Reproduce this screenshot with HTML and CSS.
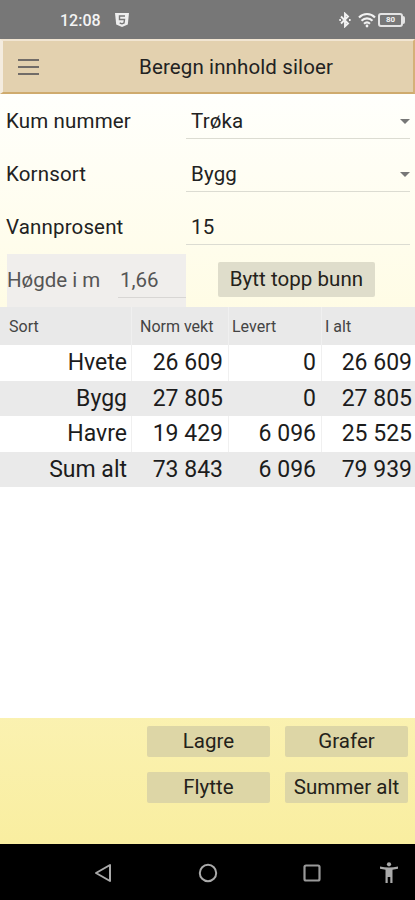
FILE: index.html
```html
<!DOCTYPE html>
<html lang="no">
<head>
    <meta charset="UTF-8">
    <meta name="viewport" content="width=device-width, initial-scale=1.0">
    <title>Beregn innhold siloer</title>
    <link rel="stylesheet" href="styles.css">
</head>
<body>
    <div class="statusbar">
        <span class="clock">12:08</span>
        <svg class="badge" width="14" height="14" viewBox="0 0 14 14">
            <path d="M0 0h14l-1.200 11.500L7 14l-5.800-2.500z" fill="#eee"/>
            <path d="M10 3H4.500v3.500H9.500L9 10l-2 .8-2.300-.8" fill="none" stroke="#777" stroke-width="1.400"/>
        </svg>
        <div class="status-icons">
            <svg width="12" height="16" viewBox="0 0 12 16" fill="none" stroke="#f2f2f2" stroke-width="1.900">
                <path d="M2 4.500l7 7L6 14.300V1.700l3 2.800-7 7"/>
                <path d="M.3 8h1.600M10 8h1.600"/>
            </svg>
            <svg class="wifi" width="18" height="16" viewBox="0 0 18 16" fill="none" stroke="#f2f2f2" stroke-width="2.100">
                <path d="M1 5.500c4.500-4.600 11.500-4.600 16 0M3.500 8.800c3.200-3.200 7.800-3.200 11 0M6 11.800c1.800-1.700 4.200-1.700 6 0"/>
                <circle cx="9" cy="14" r="1.400" fill="#f2f2f2" stroke="none"/>
            </svg>
            <div class="battery">80</div>
        </div>
    </div>

    <div class="topbar">
        <div class="menu"><i></i><i></i><i></i></div>
        <h1>Beregn innhold siloer</h1>
    </div>

    <div class="content">
        <div class="row">
            <label>Kum nummer</label>
            <div class="field select">Trøka</div>
        </div>
        <div class="row">
            <label>Kornsort</label>
            <div class="field select">Bygg</div>
        </div>
        <div class="row">
            <label>Vannprosent</label>
            <div class="field">15</div>
        </div>
        <div class="height-row">
            <div class="height-box">
                <label>Høgde i m</label>
                <div class="height-value">1,66</div>
            </div>
            <button class="swap">Bytt topp bunn</button>
        </div>

        <div class="table-area">
            <table>
                <thead>
                    <tr><th>Sort</th><th>Norm vekt</th><th>Levert</th><th>I alt</th></tr>
                </thead>
                <tbody>
                    <tr><td>Hvete</td><td>26 609</td><td>0</td><td>26 609</td></tr>
                    <tr><td>Bygg</td><td>27 805</td><td>0</td><td>27 805</td></tr>
                    <tr><td>Havre</td><td>19 429</td><td>6 096</td><td>25 525</td></tr>
                    <tr><td>Sum alt</td><td>73 843</td><td>6 096</td><td>79 939</td></tr>
                </tbody>
            </table>
        </div>

        <div class="actions">
            <button>Lagre</button>
            <button>Grafer</button>
            <button>Flytte</button>
            <button>Summer alt</button>
        </div>
    </div>

    <div class="navbar">
        <svg width="18" height="20" viewBox="0 0 18 20" fill="none" stroke="#aaa" stroke-width="2" stroke-linejoin="round">
            <path d="M16 2v16L2 10z"/>
        </svg>
        <svg width="20" height="20" viewBox="0 0 20 20" fill="none" stroke="#aaa" stroke-width="2">
            <circle cx="10" cy="10" r="8.200"/>
        </svg>
        <svg width="18" height="18" viewBox="0 0 18 18" fill="none" stroke="#999" stroke-width="2.200">
            <rect x="1.500" y="1.500" width="15" height="15" rx="1.500"/>
        </svg>
        <svg width="18" height="21" viewBox="0 0 18 21" fill="#aaa">
            <circle cx="9" cy="2.300" r="2.100"/>
            <path d="M0 4.600c6 1.200 12 1.200 18 0v2.100l-5.500 1V21h-2.200v-6H7.700v6H5.500V7.700L0 6.700z"/>
        </svg>
    </div>
</body>
</html>
```
FILE: styles.css
```css
* {
    box-sizing: border-box;
    margin: 0;
    padding: 0;
}

body {
    width: 415px;
    height: 900px;
    display: flex;
    flex-direction: column;
    overflow: hidden;
    font-family: Roboto, "Liberation Sans", sans-serif;
    font-size: 20.5px;
    letter-spacing: 0.15px;
    color: #222;
}

.statusbar {
    height: 39px;
    background: #777;
    display: flex;
    align-items: center;
    padding: 0 10px 0 60px;
    color: #f4f4f4;
}

.clock {
    width: 55px;
    font-size: 16px;
    font-weight: 500;
    letter-spacing: 0;
    padding-top: 2px;
}

.status-icons {
    margin-left: auto;
    display: flex;
    align-items: center;
}

.wifi {
    margin: 0 2px 0 7px;
}

.battery {
    position: relative;
    width: 25px;
    height: 14px;
    margin-right: 2px;
    border: 2px solid #e4e4e4;
    border-radius: 3px;
    font-size: 8px;
    font-weight: 700;
    line-height: 10px;
    letter-spacing: 0;
    text-align: center;
}

.battery::after {
    content: "";
    position: absolute;
    right: -4px;
    top: 1px;
    width: 2px;
    height: 8px;
    background: #e4e4e4;
    border-radius: 0 2px 2px 0;
}

.topbar {
    height: 55px;
    display: flex;
    align-items: center;
    background: #e3d1af;
    border: solid;
    border-width: 2px 2px 2px 3px;
    border-color: #f1e5d2 #d5b078 #cfab6e #f4ecdf;
    padding-left: 15px;
}

.menu {
    width: 21px;
    display: flex;
    flex-direction: column;
    gap: 5px;
}

.menu i {
    height: 2px;
    background: #716c68;
}

h1 {
    flex: 1;
    padding-left: 100px;
    font-size: 20.5px;
    font-weight: 400;
    letter-spacing: 0.12px;
}

.content {
    flex: 1;
    display: flex;
    flex-direction: column;
    background: linear-gradient(#fffffc, #fffce4 30%, #f9eea0);
}

.row {
    height: 53px;
    display: flex;
    padding: 0 5px 0 6px;
    line-height: 54px;
}

.row label {
    width: 180px;
}

.field {
    flex: 1;
    height: 45px;
    padding-left: 5px;
    border-bottom: 1px solid #dcdcd2;
}

.select {
    display: flex;
    justify-content: space-between;
}

.select::after {
    content: "";
    align-self: flex-start;
    margin-top: 25px;
    border: 5.5px solid transparent;
    border-top-color: #777;
    border-bottom: 0;
}

.height-row {
    height: 54px;
    display: flex;
    padding-left: 7px;
}

.height-box {
    width: 179px;
    margin-top: 1px;
    display: flex;
    background: #f0eeec;
    color: #555;
    line-height: 53px;
    letter-spacing: 0;
}

.height-box label {
    width: 111px;
}

.height-value {
    flex: 1;
    height: 44px;
    padding-left: 2px;
    border-bottom: 1px solid #d8d6d4;
}

button {
    border: 0;
    border-radius: 2px;
    background: #ddd6a6;
    font: inherit;
    letter-spacing: 0.05px;
    padding-bottom: 2px;
    color: #24221a;
}

.swap {
    width: 157px;
    height: 35px;
    margin: 9px 0 0 32px;
    background: #dfddcb;
}

.table-area {
    flex: 1;
    background: #fff;
}

table {
    width: 100%;
    table-layout: fixed;
    border-collapse: collapse;
}

th {
    height: 38px;
    background: #e9e9e9;
    padding-left: 9px;
    font-size: 16px;
    font-weight: 400;
    letter-spacing: 0;
    text-align: left;
    color: #444;
}

th:nth-child(1) {
    width: 131px;
}

th:nth-child(2) {
    width: 97px;
}

th:nth-child(3) {
    width: 93px;
    padding-left: 4px;
}

th:nth-child(4) {
    padding-left: 4px;
}

td {
    height: 35.6px;
    padding-right: 5px;
    font-size: 23px;
    letter-spacing: 0;
    text-align: right;
    color: #1c1c1c;
}

td:first-child {
    padding-right: 4px;
}

td:last-child {
    padding-right: 3px;
}

th + th,
td + td {
    box-shadow: inset 1px 0 #f0f0f0;
}

tbody tr:nth-child(even) {
    background: #eaeaea;
}

tbody tr:nth-child(even) td {
    box-shadow: none;
}

.actions {
    height: 126px;
    display: grid;
    grid-template-columns: 123px 123px;
    grid-auto-rows: 31px;
    gap: 15px;
    justify-content: end;
    padding: 8px 7px 0 0;
}

.navbar {
    height: 56px;
    display: flex;
    align-items: center;
    background: #000;
    padding: 1px 0 0 94px;
}

.navbar svg:nth-child(2) {
    margin-left: 86px;
}

.navbar svg:nth-child(3) {
    margin-left: 85px;
}

.navbar svg:nth-child(4) {
    margin-left: 59px;
}
```
